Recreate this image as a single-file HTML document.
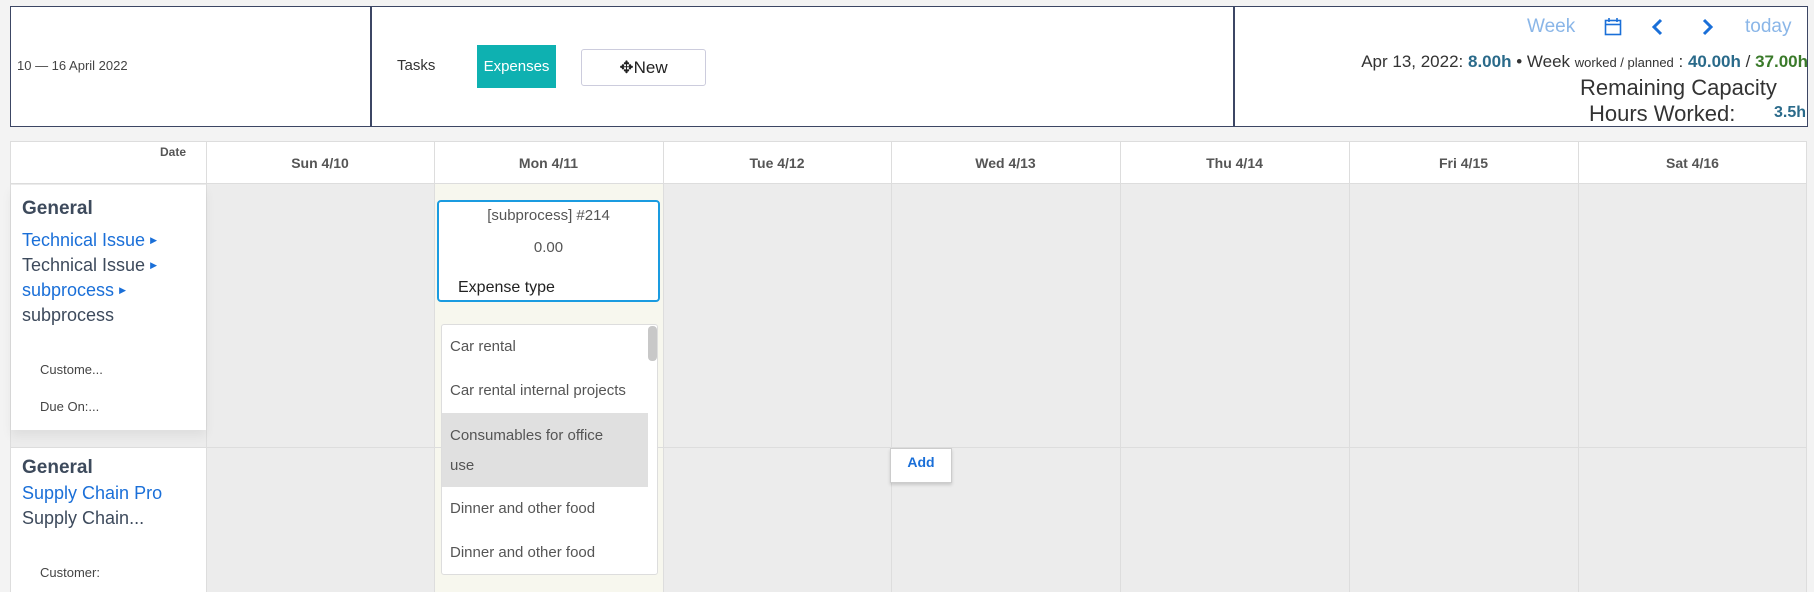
<!DOCTYPE html>
<html><head><style>
*{box-sizing:border-box;margin:0;padding:0}
html{width:1814px;height:592px;overflow:hidden}
body{width:1814px;height:592px;background:#f3f3f3;font-family:"Liberation Sans",sans-serif;position:relative;overflow:hidden;color:#333}
.a{position:absolute;white-space:nowrap}
.top{position:absolute;left:10px;top:6px;width:1798px;height:121px;background:#fff;border:1.5px solid #3c4664}
.blue{color:#1a6fd8}
.dk{color:#3d4a5c}
.tri{font-size:9px;color:#1a6fd8;vertical-align:3px}
.vl{top:141px;width:1px;height:451px;background:#ddd}
</style></head><body>
<div class="top"></div>
<div class="a" style="left:370px;top:6px;width:1.5px;height:121px;background:#3c4664"></div>
<div class="a" style="left:1233px;top:6px;width:1.5px;height:121px;background:#3c4664"></div>
<div class="a" style="left:17px;top:58px;font-size:13px;color:#444">10 — 16 April 2022</div>
<div class="a" style="left:397px;top:57px;font-size:15px;color:#333">Tasks</div>
<div class="a" style="left:477px;top:45px;width:79px;height:43px;background:#0eb1b1;color:#fff;font-size:15px;line-height:43px;text-align:center">Expenses</div>
<div class="a" style="left:581px;top:49px;width:125px;height:37px;border:1px solid #ccd;border-radius:3px;background:#fff;font-size:17px;line-height:35px;text-align:center;color:#222">✥New</div>
<div class="a" style="left:1527px;top:16px;font-size:19px;color:#8ab6e8">Week</div>
<svg class="a" style="left:1604px;top:17px" width="18" height="19" viewBox="0 0 18 19"><rect x="1.5" y="3.5" width="15" height="14" fill="none" stroke="#1a6fd8" stroke-width="1.6"/><line x1="1.5" y1="7.5" x2="16.5" y2="7.5" stroke="#1a6fd8" stroke-width="1.6"/><line x1="5" y1="1" x2="5" y2="5" stroke="#1a6fd8" stroke-width="1.6"/><line x1="13" y1="1" x2="13" y2="5" stroke="#1a6fd8" stroke-width="1.6"/></svg>
<svg class="a" style="left:1650px;top:18px" width="14" height="18" viewBox="0 0 14 18"><path d="M11 2 L4 9 L11 16" fill="none" stroke="#1a6fd8" stroke-width="3"/></svg>
<svg class="a" style="left:1701px;top:18px" width="14" height="18" viewBox="0 0 14 18"><path d="M3 2 L10 9 L3 16" fill="none" stroke="#1a6fd8" stroke-width="3"/></svg>
<div class="a" style="left:1745px;top:16px;font-size:19px;color:#8ab6e8">today</div>
<div class="a" style="right:6px;top:52px;font-size:17px;color:#333">Apr 13, 2022: <b style="color:#2a6a8a">8.00h</b> • Week <span style="font-size:13px">worked / planned</span> : <b style="color:#2a6a8a">40.00h</b> / <b style="color:#3a7a2a">37.00h</b></div>
<div class="a" style="left:1580px;top:75px;font-size:22px;color:#333">Remaining Capacity</div>
<div class="a" style="left:1589px;top:101px;font-size:22px;color:#333">Hours Worked:</div>
<div class="a" style="left:1774px;top:104px;font-size:16px;font-weight:bold;color:#2a6a8a">3.5h</div>

<div class="a" style="left:10px;top:141px;width:1797px;height:451px;background:#ececec;border-left:1px solid #ddd;border-right:1px solid #ddd"></div>
<div class="a" style="left:10px;top:141px;width:1797px;height:43px;background:#fff;border:1px solid #ddd"></div>
<div class="a" style="left:434px;top:184px;width:229px;height:408px;background:#f7f7ee"></div>
<div class="a" style="left:10px;top:447px;width:1797px;height:1px;background:#ddd"></div>
<div class="a vl" style="left:206px"></div>
<div class="a vl" style="left:434px"></div>
<div class="a vl" style="left:663px"></div>
<div class="a vl" style="left:891px"></div>
<div class="a vl" style="left:1120px"></div>
<div class="a vl" style="left:1349px"></div>
<div class="a vl" style="left:1578px"></div>
<div class="a" style="left:160px;top:145px;font-size:12px;font-weight:bold;color:#555">Date</div>
<div class="a" style="left:206px;top:155px;width:228px;text-align:center;font-size:14px;font-weight:bold;color:#555">Sun 4/10</div>
<div class="a" style="left:434px;top:155px;width:229px;text-align:center;font-size:14px;font-weight:bold;color:#555">Mon 4/11</div>
<div class="a" style="left:663px;top:155px;width:228px;text-align:center;font-size:14px;font-weight:bold;color:#555">Tue 4/12</div>
<div class="a" style="left:891px;top:155px;width:229px;text-align:center;font-size:14px;font-weight:bold;color:#555">Wed 4/13</div>
<div class="a" style="left:1120px;top:155px;width:229px;text-align:center;font-size:14px;font-weight:bold;color:#555">Thu 4/14</div>
<div class="a" style="left:1349px;top:155px;width:229px;text-align:center;font-size:14px;font-weight:bold;color:#555">Fri 4/15</div>
<div class="a" style="left:1578px;top:155px;width:229px;text-align:center;font-size:14px;font-weight:bold;color:#555">Sat 4/16</div>

<div class="a" style="left:11px;top:185px;width:195px;height:245px;background:#fff;box-shadow:0 6px 10px rgba(0,0,0,.06)"></div>
<div class="a dk" style="left:22px;top:198px;font-size:19px;font-weight:bold">General</div>
<div class="a blue" style="left:22px;top:230px;font-size:18px">Technical Issue <span class="tri">▶</span></div>
<div class="a dk" style="left:22px;top:255px;font-size:18px">Technical Issue <span class="tri">▶</span></div>
<div class="a blue" style="left:22px;top:280px;font-size:18px">subprocess <span class="tri">▶</span></div>
<div class="a dk" style="left:22px;top:305px;font-size:18px">subprocess</div>
<div class="a" style="left:40px;top:362px;font-size:13px;color:#444">Custome...</div>
<div class="a" style="left:40px;top:399px;font-size:13px;color:#444">Due On:...</div>

<div class="a" style="left:11px;top:448px;width:195px;height:144px;background:#fff"></div>
<div class="a dk" style="left:22px;top:457px;font-size:19px;font-weight:bold">General</div>
<div class="a blue" style="left:22px;top:483px;font-size:18px;width:154px;overflow:hidden">Supply Chain Pro</div>
<div class="a dk" style="left:22px;top:508px;font-size:18px">Supply Chain...</div>
<div class="a" style="left:40px;top:565px;font-size:13px;color:#444">Customer:</div>

<div class="a" style="left:437px;top:200px;width:223px;height:102px;background:#fff;border:2px solid #1a9be0;border-radius:4px"></div>
<div class="a" style="left:437px;top:207px;width:223px;text-align:center;font-size:15px;color:#555">[subprocess] #214</div>
<div class="a" style="left:437px;top:239px;width:223px;text-align:center;font-size:15px;color:#555">0.00</div>
<div class="a" style="left:458px;top:279px;font-size:16px;color:#222">Expense type</div>

<div class="a" style="left:441px;top:324px;width:217px;height:251px;background:#fff;border:1px solid #ddd;border-radius:3px"></div>
<div class="a" style="left:442px;top:413px;width:206px;height:74px;background:#e0e0e0"></div>
<div class="a" style="left:648px;top:326px;width:9px;height:35px;background:#c8c8c8;border-radius:4px"></div>
<div class="a" style="left:450px;top:338px;font-size:15px;color:#555">Car rental</div>
<div class="a" style="left:450px;top:382px;font-size:15px;color:#555">Car rental internal projects</div>
<div class="a" style="left:450px;top:427px;font-size:15px;color:#555">Consumables for office</div>
<div class="a" style="left:450px;top:457px;font-size:15px;color:#555">use</div>
<div class="a" style="left:450px;top:500px;font-size:15px;color:#555">Dinner and other food</div>
<div class="a" style="left:450px;top:544px;font-size:15px;color:#555">Dinner and other food</div>

<div class="a" style="left:890px;top:448px;width:62px;height:35px;background:#fff;border:1px solid #ccc;box-shadow:0 2px 3px rgba(0,0,0,.15);text-align:center;font-size:14px;font-weight:bold;color:#1a6fd8;line-height:26px">Add</div>
</body></html>
